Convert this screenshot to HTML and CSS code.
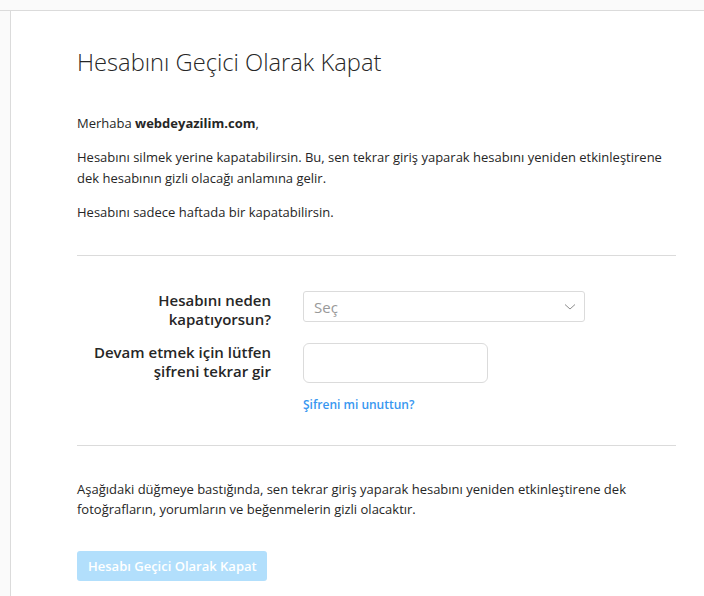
FILE: index.html
```html
<!DOCTYPE html>
<html lang="tr">
<head>
<meta charset="utf-8">
<title>Hesabını Geçici Olarak Kapat</title>
<link rel="stylesheet" href="styles.css">
</head>
<body>
<div class="topbar"></div>
<div class="layout">
  <div class="sidebar"></div>
  <main class="main">
    <h1 class="title">Hesabını Geçici Olarak Kapat</h1>
    <p class="text greet">Merhaba <b>webdeyazilim.com</b>,</p>
    <p class="text">Hesabını silmek yerine kapatabilirsin. Bu, sen tekrar giriş yaparak hesabını yeniden etkinleştirene dek hesabının gizli olacağı anlamına gelir.</p>
    <p class="text">Hesabını sadece haftada bir kapatabilirsin.</p>
    <hr class="rule">
    <div class="form">
      <div class="row">
        <label class="label">Hesabını neden kapatıyorsun?</label>
        <div class="field">
          <div class="select">
            <span class="placeholder">Seç</span>
            <svg class="chev" width="12" height="8" viewBox="0 0 12 8"><path d="M1 1.5 L6 6 L11 1.5" fill="none" stroke="#8e8e8e" stroke-width="1"/></svg>
          </div>
        </div>
      </div>
      <div class="row row2">
        <label class="label">Devam etmek için lütfen şifreni tekrar gir</label>
        <div class="field">
          <div class="input"></div>
          <a class="forgot" href="#">Şifreni mi unuttun?</a>
        </div>
      </div>
    </div>
    <hr class="rule rule-bottom">
    <p class="text note">Aşağıdaki düğmeye bastığında, sen tekrar giriş yaparak hesabını yeniden etkinleştirene dek fotoğrafların, yorumların ve beğenmelerin gizli olacaktır.</p>
    <button class="btn" type="button">Hesabı Geçici Olarak Kapat</button>
  </main>
</div>
</body>
</html>
```

FILE: styles.css
```css
html, body {
  margin: 0;
  padding: 0;
  background: #ffffff;
  font-family: "Open Sans", "Noto Sans", sans-serif;
  color: #262626;
}
.topbar {
  height: 10px;
  background: #fafafa;
  border-bottom: 1px solid #dbdbdb;
}
.layout {
  display: flex;
  min-height: 585px;
}
.sidebar {
  width: 10px;
  background: #fafafa;
  border-right: 1px solid #dbdbdb;
  flex: none;
}
.main {
  flex: 1;
  padding: 36px 28px 0 66px;
}
.title {
  margin: 0 0 36px;
  font-weight: 300;
  font-size: 23.7px;
  line-height: 30px;
  color: #262626;
}
.text {
  margin: 0 0 13px;
  font-size: 13px;
  line-height: 21px;
  color: #262626;
}
.text b { font-weight: 700; }
.rule {
  border: 0;
  border-top: 1px solid #dbdbdb;
  margin: 32px 0 0;
}
.rule-bottom {
  margin-top: 0;
}
.form {
  padding: 35px 0 32px;
}
.row {
  display: flex;
  align-items: flex-start;
}
.row2 { margin-top: 14px; }
.label {
  width: 194px;
  flex: none;
  text-align: right;
  font-size: 15px;
  font-weight: 600;
  line-height: 19px;
  color: #262626;
}
.field {
  margin-left: 32px;
  display: flex;
  flex-direction: column;
  align-items: flex-start;
}
.select {
  width: 282px;
  height: 31px;
  box-sizing: border-box;
  border: 1px solid #dbdbdb;
  border-radius: 3px;
  background: #fff;
  display: flex;
  align-items: center;
  justify-content: space-between;
  padding: 0 8px 0 10px;
}
.placeholder {
  font-size: 15px;
  color: #999;
}
.input {
  width: 185px;
  height: 40px;
  box-sizing: border-box;
  border: 1px solid #dbdbdb;
  border-radius: 6px;
  background: #fff;
}
.forgot {
  margin-top: 13px;
  font-size: 12px;
  line-height: 17px;
  font-weight: 600;
  color: #3897f0;
  text-decoration: none;
}
.note {
  margin-top: 33px;
  line-height: 20px;
}
.btn {
  display: block;
  margin-top: 32px;
  height: 30px;
  padding: 0 10px 0 11px;
  border: 0;
  border-radius: 3px;
  background: #b2dffc;
  color: #fff;
  font-family: inherit;
  font-size: 13px;
  font-weight: 600;
}
```
